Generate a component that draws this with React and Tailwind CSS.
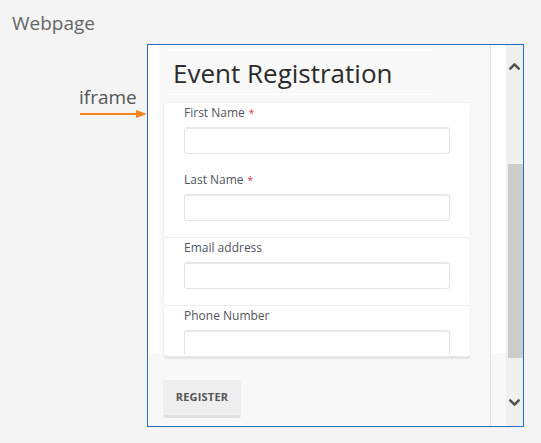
import { ChevronUp, ChevronDown } from 'lucide-react'

const fields = [
  { label: 'First Name', required: true },
  { label: 'Last Name', required: true },
]

function Field({ label, required, clip }) {
  return (
    <div className={clip ? 'pt-[1px] pl-[20px] pr-[20px] pb-[2px]' : 'pt-[1px] pl-[20px] pr-[20px] pb-[16px]'}>
      <div className="h-[17px] leading-[17px] text-[12px] text-[#50555c]">
        {label}
        {required && <span className="text-[#e0303f] text-[10px] ml-[4px]">*</span>}
      </div>
      <div className={clip ? 'mt-[6px] h-[24px] overflow-hidden' : 'mt-[6px] h-[27px]'}>
        <div className="h-[27px] w-full bg-white rounded-[3px] border border-[#e4e4e4] border-t-2 border-t-[#e8e8e8]" />
      </div>
    </div>
  )
}

export default function App() {
  return (
    <div
      className="w-[541px] h-[443px] bg-[#f4f4f4] overflow-hidden"
      style={{ fontFamily: '"Open Sans", "Liberation Sans", sans-serif' }}
    >
      <div className="pt-[10px] pl-[12px] h-[36px] text-[19px] leading-[26px] text-[#666]">Webpage</div>

      <div className="flex mt-[8px]">
        {/* label + arrow */}
        <div className="w-[147px] pt-[40px]">
          <div className="pl-[79px] text-[19px] leading-[26px] text-[#555]">iframe</div>
          <svg className="ml-[80px] block" width="67" height="8" viewBox="0 0 67 8">
            <line x1="0" y1="4" x2="58" y2="4" stroke="#f5821f" strokeWidth="2" />
            <polygon points="56,0 67,4 56,8" fill="#f5821f" />
          </svg>
        </div>

        {/* iframe */}
        <div className="w-[377px] h-[383px] border border-[#2b6cb8] flex bg-white">
          <div className="flex w-[358px] h-full">
            <div className="w-[11px] flex flex-col">
              <div className="h-[308px] bg-white" />
              <div className="flex-1 bg-[#f8f8f8]" />
            </div>

            <div className="w-[332px] bg-[#f8f8f8] border-r border-[#e3e3e3] pt-[5px] pl-[4px]">
              <div className="ml-[2px] w-[268px] h-px bg-white" />
              <h1 className="mt-[5px] pl-[10px] h-[34px] text-[26px] leading-[34px] text-[#2b2b2b]">
                Event Registration
              </h1>
              <div className="mt-[4px] ml-[2px] w-[268px] h-px bg-white" />

              <div className="mt-[7px] w-[308px]">
                <div className="bg-white rounded-[4px] border-x border-t border-[#f0f0f0]">
                  {fields.map(f => (
                    <Field key={f.label} {...f} />
                  ))}
                </div>
                <div className="bg-white rounded-[4px] border-x border-t border-[#f0f0f0]">
                  <Field label="Email address" />
                </div>
                <div className="bg-white rounded-[4px] border-x border-t border-[#f0f0f0] border-b-[3px] border-b-[#e6e6e6]">
                  <Field label="Phone Number" clip />
                </div>
              </div>

              <button className="mt-[21px] w-[78px] h-[38px] bg-[#eeeeee] rounded-[3px] border-b-[3px] border-[#e0e0e0] text-[11px] font-bold text-[#555] tracking-[0.2px]">
                REGISTER
              </button>
            </div>

            <div className="w-[15px] flex flex-col">
              <div className="h-[308px] bg-white" />
              <div className="flex-1 bg-[#f8f8f8]" />
            </div>
          </div>

          {/* scrollbar */}
          <div className="w-[17px] h-full bg-[#f0f0f0] flex flex-col items-center">
            <div className="h-[36px] w-full flex items-center justify-center pt-[6px]">
              <ChevronUp className="w-[17px] h-[17px] text-[#505050]" strokeWidth={3.5} />
            </div>
            <div className="mt-[83px] ml-[1px] w-[15px] h-[194px] bg-[#cdcdcd]" />
            <div className="mt-[36px] w-full flex items-center justify-center">
              <ChevronDown className="w-[17px] h-[17px] text-[#505050]" strokeWidth={3.5} />
            </div>
          </div>
        </div>
      </div>
    </div>
  )
}
